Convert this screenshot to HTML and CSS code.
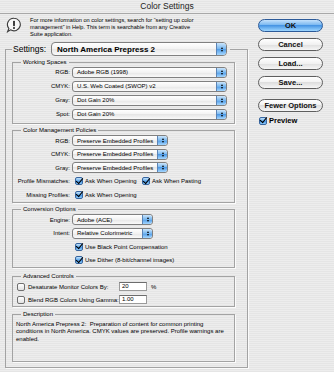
FILE: index.html
```html
<!DOCTYPE html>
<html lang="en">
<head>
    <meta charset="UTF-8">
    <meta name="viewport" content="width=device-width, initial-scale=1.0">
    <title>Color Settings</title>
    <link rel="stylesheet" href="styles.css">
</head>
<body>
    <div class="titlebar">Color Settings</div>

    <div class="content">
        <div class="left">
            <div class="info">
                <svg class="info-icon" width="16" height="16" viewBox="0 0 16 16">
                    <path d="M8 1.2a6.3 6.3 0 1 1-3.4 11.6L1.6 14.6l1.3-3.1A6.3 6.3 0 0 1 8 1.2z" fill="#f7f7f7" stroke="#3a3a3a" stroke-width="1.1"/>
                    <rect x="7.2" y="3.8" width="1.6" height="5.4" rx="0.8" fill="#111"/>
                    <circle cx="8" cy="11" r="0.95" fill="#111"/>
                </svg>
                <p>For more information on color settings, search for “setting up color<br>management” in Help. This term is searchable from any Creative<br>Suite application.</p>
            </div>

            <fieldset class="settings">
                <legend>
                    <span class="settings-label">Settings:</span>
                    <span class="popup popup-big"><span class="val">North America Prepress 2</span><span class="arrow"></span></span>
                </legend>

                <!-- Working Spaces -->
                <fieldset class="group ws">
                    <legend>Working Spaces</legend>
                    <div class="row"><label>RGB:</label><span class="popup"><span class="val">Adobe RGB (1998)</span><span class="arrow"></span></span></div>
                    <div class="row"><label>CMYK:</label><span class="popup"><span class="val">U.S. Web Coated (SWOP) v2</span><span class="arrow"></span></span></div>
                    <div class="row"><label>Gray:</label><span class="popup"><span class="val">Dot Gain 20%</span><span class="arrow"></span></span></div>
                    <div class="row"><label>Spot:</label><span class="popup"><span class="val">Dot Gain 20%</span><span class="arrow"></span></span></div>
                </fieldset>

                <!-- Color Management Policies -->
                <fieldset class="group cmp">
                    <legend>Color Management Policies</legend>
                    <div class="row"><label>RGB:</label><span class="popup"><span class="val">Preserve Embedded Profiles</span><span class="arrow"></span></span></div>
                    <div class="row"><label>CMYK:</label><span class="popup"><span class="val">Preserve Embedded Profiles</span><span class="arrow"></span></span></div>
                    <div class="row"><label>Gray:</label><span class="popup"><span class="val">Preserve Embedded Profiles</span><span class="arrow"></span></span></div>
                    <div class="row">
                        <label>Profile Mismatches:</label>
                        <span class="opt first"><span class="check on"></span>Ask When Opening</span>
                        <span class="opt"><span class="check on"></span>Ask When Pasting</span>
                    </div>
                    <div class="row">
                        <label>Missing Profiles:</label>
                        <span class="opt first"><span class="check on"></span>Ask When Opening</span>
                    </div>
                </fieldset>

                <!-- Conversion Options -->
                <fieldset class="group conv">
                    <legend>Conversion Options</legend>
                    <div class="row"><label>Engine:</label><span class="popup"><span class="val">Adobe (ACE)</span><span class="arrow"></span></span></div>
                    <div class="row"><label>Intent:</label><span class="popup"><span class="val">Relative Colorimetric</span><span class="arrow"></span></span></div>
                    <div class="row"><label></label><span class="opt first"><span class="check on"></span>Use Black Point Compensation</span></div>
                    <div class="row"><label></label><span class="opt first"><span class="check on"></span>Use Dither (8-bit/channel images)</span></div>
                </fieldset>

                <!-- Advanced Controls -->
                <fieldset class="group adv">
                    <legend>Advanced Controls</legend>
                    <div class="row">
                        <span class="check"></span>
                        <span class="adv-label">Desaturate Monitor Colors By:</span>
                        <span class="field">20</span>
                        <span class="unit">%</span>
                    </div>
                    <div class="row">
                        <span class="check"></span>
                        <span class="adv-label">Blend RGB Colors Using Gamma:</span>
                        <span class="field">1.00</span>
                    </div>
                </fieldset>

                <!-- Description -->
                <fieldset class="group desc">
                    <legend>Description</legend>
                    <p>North America Prepress 2:&nbsp; Preparation of content for common printing<br>conditions in North America. CMYK values are preserved. Profile warnings are<br>enabled.</p>
                </fieldset>
            </fieldset>
        </div>

        <div class="right">
            <div class="btn btn-default">OK</div>
            <div class="btn">Cancel</div>
            <div class="btn">Load...</div>
            <div class="btn">Save...</div>
            <div class="btn btn-gap">Fewer Options</div>
            <div class="preview"><span class="check on"></span>Preview</div>
        </div>
    </div>
</body>
</html>
```

FILE: styles.css
```css
* {
    margin: 0;
    padding: 0;
    box-sizing: border-box;
}

body {
    width: 334px;
    height: 372px;
    overflow: hidden;
    font-family: "Liberation Sans", Arial, sans-serif;
    font-size: 6px;
    color: #000;
    background: repeating-linear-gradient(to bottom, #ededed 0, #ededed 1px, #e5e5e5 1px, #e5e5e5 2px);
}

.titlebar {
    height: 14px;
    line-height: 13px;
    text-align: center;
    font-size: 8.5px;
    color: #222;
    border-bottom: 1px solid #a8a8a8;
}

.content {
    display: flex;
}

.left {
    width: 248px;
    padding: 3px 0 0 5px;
}

.info {
    display: flex;
    align-items: flex-start;
    height: 21px;
}

.info-icon {
    flex: none;
    margin-left: 1px;
}

.info p {
    margin-left: 8px;
    font-size: 5.6px;
    line-height: 7px;
}

/* group boxes */
fieldset {
    border: 1px solid #a3a3a3;
    box-shadow: 1px 1px 0 #fbfbfb;
    min-width: 0;
}

.settings {
    margin-top: 4px;
    width: 243px;
    padding: 0 12px 5px 6px;
}

.settings > legend {
    display: flex;
    align-items: center;
    height: 14px;
    padding: 0 3px 0 1px;
    margin-left: 0;
}

.settings-label {
    font-size: 8.5px;
    margin-right: 5px;
}

.group {
    padding: 1px 0 0 0;
}

.group > legend {
    font-size: 6px;
    line-height: 6px;
    padding: 0 2px;
    margin-left: 8px;
}

.ws {
    margin-top: 3px;
    padding: 0 0 2px 0;
}

.cmp {
    margin-top: 3px;
}

.conv {
    margin-top: 3.5px;
}

.adv {
    margin-top: 5px;
}

.desc {
    margin-top: 4px;
}

.desc p {
    height: 43px;
    padding: 2.5px 0 0 3px;
    line-height: 7.5px;
}

/* rows */
.row {
    display: flex;
    align-items: center;
    height: 14px;
}

.cmp .row,
.conv .row {
    height: 13.5px;
}

.adv .row {
    height: 13px;
}

.row label {
    flex: none;
    width: 57px;
    margin-right: 2px;
    text-align: right;
    white-space: nowrap;
}

/* popup menus */
.popup {
    display: flex;
    align-items: center;
    width: 155px;
    height: 11px;
    border: 1px solid #808080;
    border-radius: 3px;
    background: linear-gradient(#ffffff, #f2f2f2 50%, #e6e6e6 50%, #fafafa);
    overflow: hidden;
    white-space: nowrap;
}

.cmp .popup {
    width: 96px;
}

.conv .popup {
    width: 81px;
}

.popup .val {
    flex: 1;
    padding-left: 4px;
}

.popup .arrow {
    flex: none;
    width: 10px;
    align-self: stretch;
    border-left: 1px solid #5b84b6;
    border-radius: 0 2px 2px 0;
    background: linear-gradient(#cbe5fb, #74b5ef 50%, #4e9ae6 50%, #a5d7ff);
    display: flex;
    flex-direction: column;
    align-items: center;
    justify-content: center;
    gap: 1px;
}

.popup .arrow::before,
.popup .arrow::after {
    content: "";
    border-left: 1.5px solid transparent;
    border-right: 1.5px solid transparent;
}

.popup .arrow::before {
    border-bottom: 2px solid #000;
}

.popup .arrow::after {
    border-top: 2px solid #000;
}

.popup-big {
    width: 176px;
    height: 14px;
    font-size: 8px;
    font-weight: bold;
    border-radius: 4px;
}

.popup-big .val {
    padding-left: 5px;
}

.popup-big .arrow {
    width: 10px;
}

/* checkboxes */
.check {
    flex: none;
    width: 8px;
    height: 8px;
    border: 1px solid #707070;
    border-radius: 2px;
    background: linear-gradient(#ffffff, #e2e2e2);
    display: flex;
    align-items: center;
    justify-content: center;
}

.check.on {
    border-color: #37659f;
    background: linear-gradient(#c3e2fb, #5fa9ec 50%, #3e8ee2 50%, #92cffc);
}

.check.on::after {
    content: "";
    width: 2.5px;
    height: 6px;
    border: solid #000;
    border-width: 0 1.6px 1.6px 0;
    transform: translate(0.5px, -1.5px) rotate(40deg);
}

.opt {
    display: flex;
    align-items: center;
    white-space: nowrap;
}

.opt .check {
    margin-right: 2px;
}

.opt.first {
    width: 67px;
    margin-left: 3px;
}

/* advanced controls */
.adv .check {
    margin-left: 4px;
}

.adv-label {
    width: 94px;
    padding-left: 3px;
    white-space: nowrap;
}

.field {
    width: 28px;
    height: 9px;
    padding-left: 2px;
    line-height: 7px;
    background: #fff;
    border: 1px solid #9a9a9a;
    border-top-color: #6c6c6c;
}

.unit {
    margin-left: 4px;
}

/* buttons */
.right {
    display: flex;
    flex-direction: column;
    padding: 5px 0 0 10px;
}

.btn {
    width: 65px;
    height: 13px;
    border: 1px solid #5e5e5e;
    border-radius: 7px;
    background: linear-gradient(#ffffff, #f1f1f1 50%, #dedede 50%, #f6f6f6);
    display: flex;
    align-items: center;
    justify-content: center;
    font-size: 7.5px;
    font-weight: bold;
    color: #111;
    margin-top: 6px;
}

.btn-default {
    margin-top: 0;
    border-color: #2c5a98;
    background: linear-gradient(#c4e1fb, #72b3ef 50%, #4795e4 50%, #9dd6ff);
}

.btn-gap {
    margin-top: 10px;
}

.preview {
    display: flex;
    align-items: center;
    margin-top: 4px;
    padding-left: 1px;
    font-size: 7.5px;
    font-weight: bold;
}

.preview .check {
    margin-right: 2px;
}
```
